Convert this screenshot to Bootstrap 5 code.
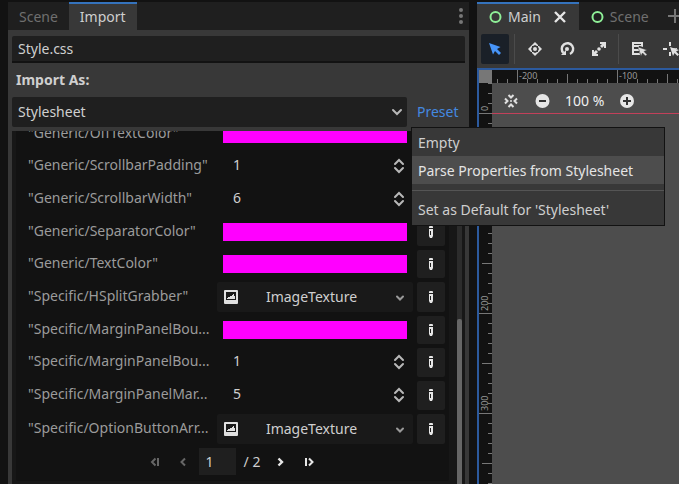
<!DOCTYPE html>
<html lang="en">
<head>
<meta charset="utf-8">
<meta name="viewport" content="width=device-width, initial-scale=1">
<title>Import dock</title>
<link href="https://cdn.jsdelivr.net/npm/bootstrap@5.3.0/dist/css/bootstrap.min.css" rel="stylesheet">
<style>
:root{--deep:#121212;--field:#1f1f1f;--panel:#383838;--canvas:#4d4d4d;--txt:#cfcfcf}
body{font:14px/20px "Noto Sans",sans-serif;background:var(--deep);color:var(--txt);height:100vh;overflow:hidden}
button,input,select{font:inherit;color:inherit;border:0;background:none;padding:0;min-width:0}
button:focus,input:focus,select:focus{outline:0}
svg{display:block;flex:none}
.editor{display:grid;grid-template-columns:minmax(0,461fr) minmax(0,202fr);grid-template-rows:minmax(0,1fr);gap:8px;height:100vh;padding:2px 0 0 8px}
.dock{background:var(--panel);border-radius:2px 2px 0 0}
.tabs{background:var(--field);height:28px}
.tab-btn{height:28px;padding:0 11px;color:#6f6f6f;border-top:2px solid transparent;line-height:24px}
.tab-btn.on{background:var(--panel);border-top-color:#3573bd;color:var(--txt)}
.scene-tab{padding-right:10px}
.dock-body{padding:6px 4px 0;min-height:0}
.path-box{height:27px;padding:0 6px;background:var(--field);border-bottom:2px solid var(--deep);border-radius:2px 2px 0 0}
.as-label{height:34px;line-height:34px;padding-left:4px}
.kind{height:30px;padding:0 6px;appearance:none;border-radius:2px;background:var(--field) url("data:image/svg+xml,%3Csvg xmlns='http://www.w3.org/2000/svg' width='16' height='16'%3E%3Cpath d='M4 6l4 4 4-4' fill='none' stroke='%23b8b8b8' stroke-width='2' stroke-linecap='round'/%3E%3C/svg%3E") no-repeat right 2px center}
.preset{width:54px;height:30px;padding:0 6px;color:#4489e0;text-align:left}
.preset-menu{position:absolute;top:100%;left:0;z-index:5;min-width:254px;background:var(--panel);border:1px solid var(--deep);padding-bottom:1px}
.preset-menu button{display:block;width:100%;height:28px;padding:2px 6px 0;text-align:left;white-space:nowrap}
.preset-menu .hot{background:var(--canvas);color:#e4e4e4}
.preset-menu hr{margin:6px 0 5px;border-top:1px solid #555;opacity:1}
.preset-menu hr + button{padding-top:0}
.scroller{margin-top:4px;background:#171717;overflow:hidden;padding:0 3px 0 4px;min-height:0}
.prop-view{min-width:0;padding-bottom:3px}
.props{background:var(--deep);padding:0 4px 6px 12px;gap:4px;border-radius:2px}
.prop{display:grid;grid-template-columns:minmax(0,185fr) minmax(0,196fr) 28px;column-gap:4px;height:28px}
.prop.num{height:29px}
.prop.tex{height:30px}
.prop label{color:#9b9b9b;white-space:nowrap;overflow:hidden;align-self:center;line-height:24px;padding-bottom:2px}
.prop.num label{padding-bottom:4px}
.swatch{margin:5px 6px;background:#f0f}
.spin{padding:0 6px 2px 16px}
.spin input{padding-bottom:1px}
.pick{background:#191919;border-radius:2px;padding:0 5px 0 6px}
.pick span{padding-right:8px}
.edit{background:var(--field);border-radius:2px;padding-bottom:1px}
.pager{height:27px;padding-right:6px}
.page-box{width:37px;height:27px;background:var(--field);padding:0 7px}
.rail{width:5px;margin-left:8px;background:#2c2c2c}
.thumb{background:#666;border-radius:2px 2px 0 0;height:165px;width:5px}
.view{min-width:0;overflow:hidden}
.tools{height:38px;background:var(--panel);padding:4px}
.tool{flex:none;width:28px;height:30px;border-radius:2px}
.tool.on{background:#1a2028}
.bar{flex:none;width:4px;height:30px;border-left:1px solid #4b4b4b;margin-left:1px;margin-right:-1px}
.stage{display:grid;grid-template-columns:13px minmax(0,1fr);grid-template-rows:13px minmax(0,1fr);border-top:2px solid #2c5a9e;border-left:2px solid #2c5a9e;flex:1;min-height:0}
.corner{background:#777}
.paper{background:var(--canvas);min-width:0;min-height:0}
.zoombar{height:30px;padding:6px 11px 0;color:#f0f0f0;gap:15px}
.origin{border-top:1px solid #c2405a}
.ruler{background:var(--deep);overflow:visible}
.ruler text{font:9px "Noto Sans",sans-serif;fill:#999}
</style>
<script src="https://cdn.jsdelivr.net/npm/bootstrap@5.3.0/dist/js/bootstrap.bundle.min.js"></script>
</head>
<body>
<svg width="0" height="0" class="position-absolute" aria-hidden="true">
  <symbol id="pen" viewBox="0 0 16 16"><path fill="#e6e6e6" d="M6 3Q6 2 7 2h2Q10 2 10 3V4H6zM6 5h4v7l-1 2H7l-1-2zM7 7v4h1V7z" fill-rule="evenodd"/></symbol>
  <symbol id="updown" viewBox="0 0 16 16"><path d="M4 6l4-4 4 4M4 10l4 4 4-4" fill="none" stroke="#b8b8b8" stroke-width="2" stroke-linecap="round"/></symbol>
  <symbol id="pic" viewBox="0 0 16 16"><path fill="#e0e0e0" fill-rule="evenodd" d="M2 1h12q1 0 1 1v12q0 1-1 1H2q-1 0-1-1V2q0-1 1-1zM3 3v8h10V3zM4 10V9h1V8h2V7h2V6h1V5h1v2h1v3z"/></symbol>
  <symbol id="down" viewBox="0 0 16 16"><path d="M5 7.500l3 3 3-3" fill="none" stroke="#999" stroke-width="2" stroke-linecap="round"/></symbol>
  <symbol id="ring" viewBox="0 0 16 16"><circle cx="7.500" cy="8" r="5" fill="none" stroke="#8eef97" stroke-width="2"/></symbol>
</svg>
<main class="editor">
  <section class="dock d-flex flex-column">
    <div class="tabs d-flex align-items-center">
      <button class="tab-btn">Scene</button>
      <button class="tab-btn on">Import</button>
      <button class="ms-auto" aria-label="Dock options"><svg width="16" height="18" viewBox="0 0 16 18" fill="#777"><circle cx="8" cy="3" r="2"/><circle cx="8" cy="9" r="2"/><circle cx="8" cy="15" r="2"/></svg></button>
    </div>
    <div class="dock-body d-flex flex-column flex-fill">
      <input class="path-box w-100 flex-shrink-0" value="Style.css" aria-label="File">
      <label class="as-label fw-bold flex-shrink-0" for="kind">Import As:</label>
      <div class="d-flex gap-1 flex-shrink-0">
        <select class="kind flex-fill" id="kind"><option>Stylesheet</option></select>
        <div class="position-relative">
          <button class="preset">Preset</button>
          <div class="preset-menu">
            <button>Empty</button>
            <button class="hot">Parse Properties from Stylesheet</button>
            <hr>
            <button>Set as Default for 'Stylesheet'</button>
          </div>
        </div>
      </div>
      <div class="scroller d-flex flex-fill">
        <div class="prop-view d-flex flex-column justify-content-end flex-fill">
          <div class="props d-flex flex-column">
            <div class="prop"><label for="p1">"Generic/OffTextColor"</label><button id="p1" class="swatch"></button><button class="edit d-flex align-items-center justify-content-center" aria-label="Edit"><svg width="16" height="16"><use href="#pen"/></svg></button></div>
            <div class="prop num"><label for="p2">"Generic/ScrollbarPadding"</label><div class="spin d-flex align-items-center"><input id="p2" class="flex-fill" value="1"><svg width="16" height="16"><use href="#updown"/></svg></div><button class="edit d-flex align-items-center justify-content-center" aria-label="Edit"><svg width="16" height="16"><use href="#pen"/></svg></button></div>
            <div class="prop num"><label for="p3">"Generic/ScrollbarWidth"</label><div class="spin d-flex align-items-center"><input id="p3" class="flex-fill" value="6"><svg width="16" height="16"><use href="#updown"/></svg></div><button class="edit d-flex align-items-center justify-content-center" aria-label="Edit"><svg width="16" height="16"><use href="#pen"/></svg></button></div>
            <div class="prop"><label for="p4">"Generic/SeparatorColor"</label><button id="p4" class="swatch"></button><button class="edit d-flex align-items-center justify-content-center" aria-label="Edit"><svg width="16" height="16"><use href="#pen"/></svg></button></div>
            <div class="prop"><label for="p5">"Generic/TextColor"</label><button id="p5" class="swatch"></button><button class="edit d-flex align-items-center justify-content-center" aria-label="Edit"><svg width="16" height="16"><use href="#pen"/></svg></button></div>
            <div class="prop tex"><label for="p6">"Specific/HSplitGrabber"</label><button id="p6" class="pick d-flex align-items-center"><svg width="16" height="16"><use href="#pic"/></svg><span class="flex-fill text-center">ImageTexture</span><svg width="16" height="16"><use href="#down"/></svg></button><button class="edit d-flex align-items-center justify-content-center" aria-label="Edit"><svg width="16" height="16"><use href="#pen"/></svg></button></div>
            <div class="prop"><label for="p7">"Specific/MarginPanelBou...</label><button id="p7" class="swatch"></button><button class="edit d-flex align-items-center justify-content-center" aria-label="Edit"><svg width="16" height="16"><use href="#pen"/></svg></button></div>
            <div class="prop num"><label for="p8">"Specific/MarginPanelBou...</label><div class="spin d-flex align-items-center"><input id="p8" class="flex-fill" value="1"><svg width="16" height="16"><use href="#updown"/></svg></div><button class="edit d-flex align-items-center justify-content-center" aria-label="Edit"><svg width="16" height="16"><use href="#pen"/></svg></button></div>
            <div class="prop num"><label for="p9">"Specific/MarginPanelMar...</label><div class="spin d-flex align-items-center"><input id="p9" class="flex-fill" value="5"><svg width="16" height="16"><use href="#updown"/></svg></div><button class="edit d-flex align-items-center justify-content-center" aria-label="Edit"><svg width="16" height="16"><use href="#pen"/></svg></button></div>
            <div class="prop tex"><label for="p10">"Specific/OptionButtonArr...</label><button id="p10" class="pick d-flex align-items-center"><svg width="16" height="16"><use href="#pic"/></svg><span class="flex-fill text-center">ImageTexture</span><svg width="16" height="16"><use href="#down"/></svg></button><button class="edit d-flex align-items-center justify-content-center" aria-label="Edit"><svg width="16" height="16"><use href="#pen"/></svg></button></div>
            <div class="pager d-flex align-items-center justify-content-center">
              <button aria-label="First page" class="me-2"><svg width="20" height="16" fill="none" stroke="#666" stroke-width="2"><path d="M8.500 4.500L5 8l3.500 3.500M11 4v8"/></svg></button>
              <button aria-label="Previous page" class="me-2"><svg width="16" height="16" fill="none" stroke="#666" stroke-width="2"><path d="M10 4.500L6.500 8l3.500 3.500"/></svg></button>
              <input class="page-box me-2" value="1" aria-label="Page"><span class="me-2">/ 2</span>
              <button aria-label="Next page" class="ms-1 me-2"><svg width="16" height="16" fill="none" stroke="#e6e6e6" stroke-width="2.400"><path d="M6.500 4.500L10 8l-3.500 3.500"/></svg></button>
              <button aria-label="Last page" class="ms-1"><svg width="20" height="16" fill="none" stroke="#e6e6e6" stroke-width="2"><path d="M6 4v8M9 4.500l3.500 3.500L9 11.500" /></svg></button>
            </div>
          </div>
        </div>
        <div class="rail d-flex align-items-end flex-shrink-0"><div class="thumb"></div></div>
      </div>
    </div>
  </section>
  <section class="view d-flex flex-column">
    <div class="tabs d-flex flex-shrink-0">
      <button class="tab-btn on scene-tab d-flex align-items-center gap-1"><svg width="16" height="16"><use href="#ring"/></svg>Main<svg class="ms-2" width="16" height="16" stroke="#e6e6e6" stroke-width="2.400"><path d="M2 3l10 10M12 3L2 13"/></svg></button>
      <button class="tab-btn scene-tab d-flex align-items-center gap-1"><svg width="16" height="16"><use href="#ring"/></svg>Scene</button>
      <button aria-label="New scene" class="ms-1"><svg width="16" height="16" stroke="#777" stroke-width="2"><path d="M12 1v14M5 8h14"/></svg></button>
    </div>
    <div class="tools d-flex gap-1 flex-shrink-0">
      <button class="tool on d-flex align-items-center justify-content-center" aria-label="Select"><svg width="16" height="16"><path fill="#4794f8" d="M2 2l4 11.500 2-3.500 4 4 2-2-4-4 3.500-2z"/></svg></button>
      <span class="bar"></span>
      <button class="tool d-flex align-items-center justify-content-center" aria-label="Move"><svg width="16" height="16" fill="#e0e0e0"><circle cx="8" cy="8" r="2"/><path d="M8 1l4 4H10L8 4 6 5H4zM8 15l4-4H10l-2 1-2-1H4zM1 8l4-4v2L4 8l1 2v2zM15 8l-4-4v2l1 2-1 2v2z"/></svg></button>
      <button class="tool d-flex align-items-center justify-content-center" aria-label="Rotate"><svg width="16" height="16"><circle cx="8" cy="8" r="2" fill="#e0e0e0"/><path d="M4.500 12A5.700 5.700 0 1 1 11 13" fill="none" stroke="#e0e0e0" stroke-width="2.400"/><path fill="#e0e0e0" d="M2 14l5 0V9z"/></svg></button>
      <button class="tool d-flex align-items-center justify-content-center" aria-label="Scale"><svg width="16" height="16" fill="#e0e0e0"><path d="M9 1h6v6h-2V5l-2 2-2-2 2-2H9zM1 9h2v2l2-2 2 2-2 2h2v2H1z"/><circle cx="8" cy="8" r="1.800"/></svg></button>
      <span class="bar"></span>
      <button class="tool d-flex align-items-center justify-content-center" aria-label="List select"><svg width="16" height="16" fill="#e0e0e0"><path fill-rule="evenodd" d="M1 1h11v5l-3-1H8v2l1 7H1zM3 3v1h7V3zM3 6v2h4V6zM3 10v2h5v-2z"/><path d="M7 6l3 9 1.500-3 3 3 1.500-1.500-3-3 3-1.500z" stroke="#383838" stroke-width=".5"/></svg></button>
      <button class="tool d-flex align-items-center justify-content-center" aria-label="Pivot"><svg width="16" height="16" fill="#e0e0e0"><path d="M6 1h2v4H6zM0 7h4v2H0zM10 7h4v1l-4-1zM6 11h2v4H6zM7 6l3 9 1.500-3 3 3 1.500-1.500-3-3 3-1.500z"/></svg></button>
    </div>
    <div class="stage">
      <div class="corner"></div>
      <svg class="ruler" width="100%" height="13" aria-label="Horizontal ruler">
        <defs><pattern id="hx" x="25" width="100" height="13" patternUnits="userSpaceOnUse"><path d="M.5 0v13M50.500 4v9M10.500 9v4M20.500 9v4M30.500 9v4M40.500 9v4M60.500 9v4M70.500 9v4M80.500 9v4M90.500 9v4" stroke="#777"/></pattern></defs>
        <rect width="100%" height="13" fill="url(#hx)"/>
        <text x="27" y="9">-200</text><text x="127" y="9">-100</text>
      </svg>
      <svg class="ruler" width="13" height="100%" aria-label="Vertical ruler">
        <defs><pattern id="vx" y="30" width="13" height="100" patternUnits="userSpaceOnUse"><path d="M0 .5h13M3 50.500h10M9 10.500h4M9 20.500h4M9 30.500h4M9 40.500h4M9 60.500h4M9 70.500h4M9 80.500h4M9 90.500h4" stroke="#777"/></pattern></defs>
        <rect width="13" height="100%" fill="url(#vx)"/>
        <text transform="translate(9 28) rotate(-90)">0</text><text transform="translate(9 228) rotate(-90)">200</text><text transform="translate(9 328) rotate(-90)">300</text>
      </svg>
      <div class="paper">
        <div class="zoombar d-flex align-items-center">
          <button aria-label="Center view"><svg width="16" height="16" fill="none" stroke="#e0e0e0" stroke-width="2"><circle cx="8" cy="8" r="1" fill="#e0e0e0" stroke="none"/><path d="M5.500 2L8 4.500 10.500 2M5.500 14L8 11.500l2.500 2.500M2 5.500L4.500 8 2 10.500M14 5.500L11.500 8l2.500 2.500"/></svg></button>
          <button aria-label="Zoom out"><svg width="16" height="16"><circle cx="8.500" cy="8" r="7" fill="#e6e6e6"/><path d="M5 8h7" stroke="#333" stroke-width="2"/></svg></button>
          <button>100 %</button>
          <button aria-label="Zoom in"><svg width="16" height="16"><circle cx="8" cy="8" r="7" fill="#e6e6e6"/><path d="M4 8h8M8 4v8" stroke="#333" stroke-width="2"/></svg></button>
        </div>
        <div class="origin"></div>
      </div>
    </div>
  </section>
</main>
</body>
</html>
